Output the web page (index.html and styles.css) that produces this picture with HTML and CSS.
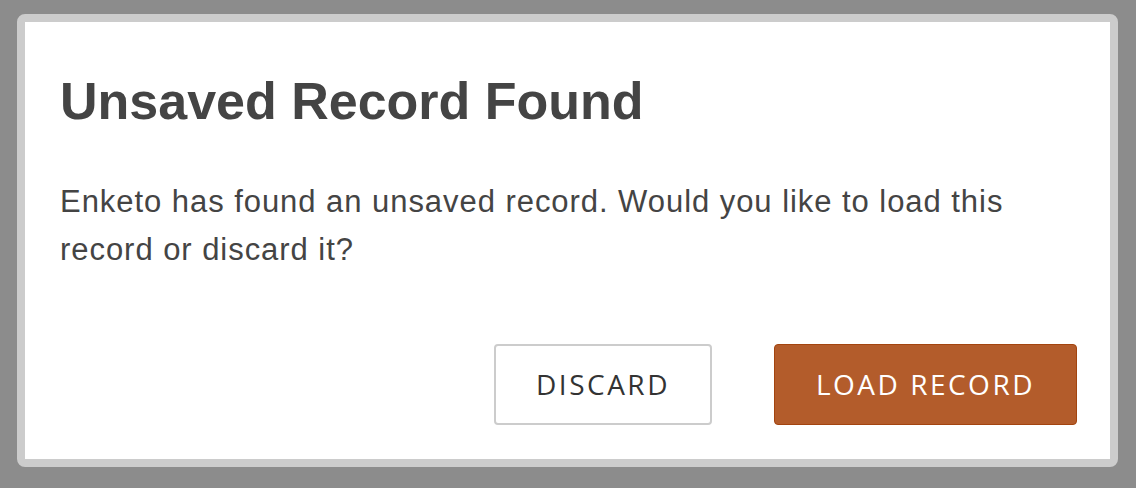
FILE: index.html
```html
<!DOCTYPE html>
<html lang="en">
<head>
  <meta charset="UTF-8">
  <meta name="viewport" content="width=device-width, initial-scale=1.0">
  <title>Unsaved Record Found</title>
  <link rel="stylesheet" href="styles.css">
</head>
<body>
  <div class="dialog">
    <h2 class="dialog-title">Unsaved Record Found</h2>
    <p class="dialog-msg">Enketo has found an unsaved record. Would you like to load this record or discard it?</p>
    <div class="dialog-actions">
      <button class="btn btn-default">Discard</button>
      <button class="btn btn-primary">Load Record</button>
    </div>
  </div>
</body>
</html>
```

FILE: styles.css
```css
html, body { margin: 0; height: 100%; }
body { background: #8c8c8c; padding: 14px 18px 0 17px; box-sizing: border-box; font-family: "Liberation Sans", Arial, sans-serif; color: #444; }
.dialog { background: #fff; border: 8px solid #ccc; border-radius: 8px; padding: 33px 33px 34px 35px; }
.dialog-title { font-size: 52px; font-weight: bold; margin: 17px 0 0; color: #444; line-height: 1.15; }
.dialog-msg { font-size: 31px; letter-spacing: 0.95px; line-height: 48px; margin: 46px 0 0; max-width: 990px; }
.dialog-actions { display: flex; justify-content: flex-end; gap: 62px; margin-top: 70px; }
.btn { font-family: "Open Sans", sans-serif; font-size: 28px; letter-spacing: 2.5px; text-transform: uppercase; height: 81px; padding: 0 40px; border-radius: 4px; cursor: pointer; }
.btn-default { background: #fff; border: 2px solid #ccc; color: #333; }
.btn-primary { background: #b35c2b; border: 1px solid #a3440f; color: #fff; padding: 0 41px; }
```
